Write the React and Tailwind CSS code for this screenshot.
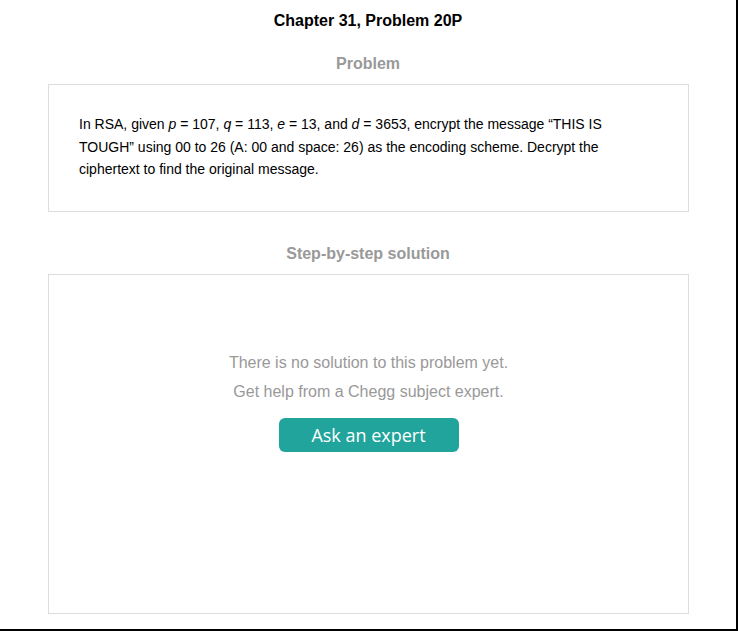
export default function App() {
  return (
    <div className="h-[631px] w-[738px] border-r-2 border-b-2 border-black bg-white font-['Liberation_Sans',Arial,sans-serif]">
      <h1 className="pt-[11px] text-center text-[16px] font-bold leading-[20px] text-black">Chapter 31, Problem 20P</h1>

      <h2 className="mt-[23px] text-center text-[16px] font-bold leading-[20px] text-[#999]">Problem</h2>
      <div className="ml-[48px] mr-[47px] mt-[10px] h-[128px] border border-[#ddd] pl-[30px] pr-[28px] pt-[28px]">
        <p className="text-[14px] leading-[22.5px] text-black">
          In RSA, given <i>p</i> = 107, <i>q</i> = 113, <i>e</i> = 13, and <i>d</i> = 3653, encrypt the message “THIS IS
          TOUGH” using 00 to 26 (A: 00 and space: 26) as the encoding scheme. Decrypt the ciphertext to find the original
          message.
        </p>
      </div>

      <h2 className="mt-[32px] text-center text-[16px] font-bold leading-[20px] text-[#999]">Step-by-step solution</h2>
      <div className="ml-[48px] mr-[47px] mt-[10px] flex h-[340px] flex-col items-center border border-[#ddd] pt-[78px]">
        <p className="text-[16px] leading-[20px] text-[#999]">There is no solution to this problem yet.</p>
        <p className="mt-[9px] text-[16px] leading-[20px] text-[#999]">Get help from a Chegg subject expert.</p>
        <button
          type="button"
          className="mt-[16px] h-[34px] w-[180px] rounded-[6px] bg-[#21a49b] font-['Open_Sans',sans-serif] text-[18px] text-white"
        >
          Ask an expert
        </button>
      </div>
    </div>
  );
}
